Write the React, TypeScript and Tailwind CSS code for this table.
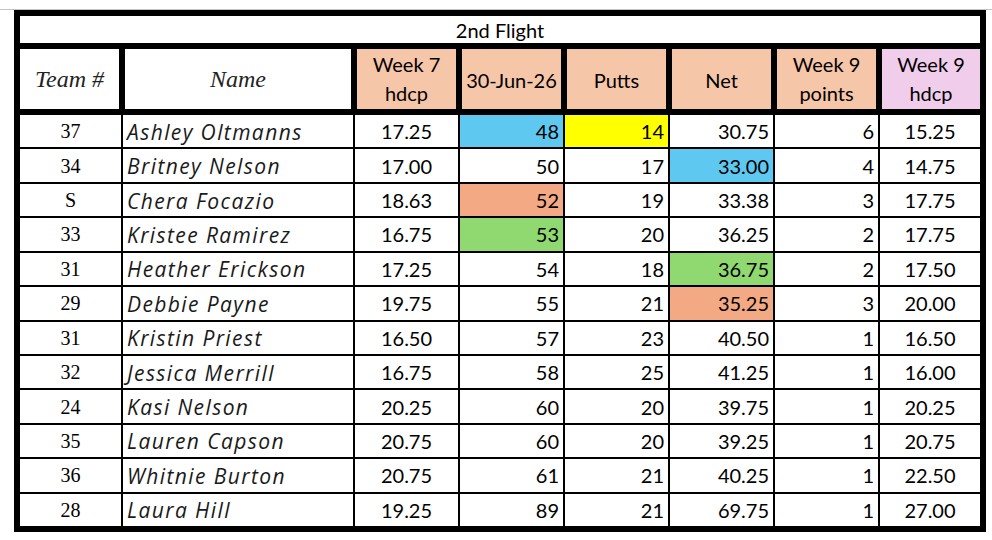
import React from "react";

type Row = {
  team: string;
  name: string;
  w7: string;
  score: string;
  putts: string;
  net: string;
  pts: string;
  hdcp: string;
  scoreBg?: string;
  puttsBg?: string;
  netBg?: string;
};

const BLUE = "bg-[#5ec8f0]";
const YELLOW = "bg-[#ffff00]";
const SALMON = "bg-[#f2a984]";
const GREEN = "bg-[#90d870]";

const rows: Row[] = [
  { team: "37", name: "Ashley Oltmanns", w7: "17.25", score: "48", putts: "14", net: "30.75", pts: "6", hdcp: "15.25", scoreBg: BLUE, puttsBg: YELLOW },
  { team: "34", name: "Britney Nelson", w7: "17.00", score: "50", putts: "17", net: "33.00", pts: "4", hdcp: "14.75", netBg: BLUE },
  { team: "S", name: "Chera Focazio", w7: "18.63", score: "52", putts: "19", net: "33.38", pts: "3", hdcp: "17.75", scoreBg: SALMON },
  { team: "33", name: "Kristee Ramirez", w7: "16.75", score: "53", putts: "20", net: "36.25", pts: "2", hdcp: "17.75", scoreBg: GREEN },
  { team: "31", name: "Heather Erickson", w7: "17.25", score: "54", putts: "18", net: "36.75", pts: "2", hdcp: "17.50", netBg: GREEN },
  { team: "29", name: "Debbie Payne", w7: "19.75", score: "55", putts: "21", net: "35.25", pts: "3", hdcp: "20.00", netBg: SALMON },
  { team: "31", name: "Kristin Priest", w7: "16.50", score: "57", putts: "23", net: "40.50", pts: "1", hdcp: "16.50" },
  { team: "32", name: "Jessica Merrill", w7: "16.75", score: "58", putts: "25", net: "41.25", pts: "1", hdcp: "16.00" },
  { team: "24", name: "Kasi Nelson", w7: "20.25", score: "60", putts: "20", net: "39.75", pts: "1", hdcp: "20.25" },
  { team: "35", name: "Lauren Capson", w7: "20.75", score: "60", putts: "20", net: "39.25", pts: "1", hdcp: "20.75" },
  { team: "36", name: "Whitnie Burton", w7: "20.75", score: "61", putts: "21", net: "40.25", pts: "1", hdcp: "22.50" },
  { team: "28", name: "Laura Hill", w7: "19.25", score: "89", putts: "21", net: "69.75", pts: "1", hdcp: "27.00" },
];

const sans = "font-['Lato','Liberation_Sans',sans-serif]";
const serif = "font-['Liberation_Serif','DejaVu_Serif',serif]";
const script = "font-['Open_Sans','Liberation_Sans',sans-serif]";

const cols = "grid grid-cols-[101px_230px_103px_103px_103px_103px_103px_100px]";

export default function App() {
  return (
    <div className="w-[992px] h-[540px] bg-white text-black overflow-hidden">
      <div className="h-[9px]" />
      <div className="h-px bg-[#c4c4c4]" />
      <div className="ml-[14px] w-[972px] bg-black p-[6px] flex flex-col gap-[6px]">
        <div className={`h-[27px] bg-white flex items-center justify-center text-[20px] ${sans}`}>
          2nd Flight
        </div>
        <div className={`${cols} gap-x-[2px] h-[60px] bg-black`}>
          <div className={`bg-white border-r-2 border-black flex items-center justify-center italic text-[24px] text-[#222] ${serif}`}>
            Team #
          </div>
          <div className={`bg-white border-x-2 border-black flex items-center justify-center italic text-[24px] text-[#222] ${serif}`}>
            Name
          </div>
          <div className={`bg-[#f6c6a9] border-x-2 border-black flex items-center justify-center text-center text-[20px] leading-[29px] ${sans}`}>
            Week 7<br />hdcp
          </div>
          <div className={`bg-[#f6c6a9] border-x-2 border-black flex items-center justify-center text-[20px] pt-[2px] ${sans}`}>
            30-Jun-26
          </div>
          <div className={`bg-[#f6c6a9] border-x-2 border-black flex items-center justify-center text-[20px] pt-[2px] ${sans}`}>
            Putts
          </div>
          <div className={`bg-[#f6c6a9] border-x-2 border-black flex items-center justify-center text-[20px] pt-[2px] ${sans}`}>
            Net
          </div>
          <div className={`bg-[#f6c6a9] border-x-2 border-black flex items-center justify-center text-center text-[20px] leading-[29px] ${sans}`}>
            Week 9<br />points
          </div>
          <div className={`bg-[#f1cdec] border-l-2 border-black flex items-center justify-center text-center text-[20px] leading-[29px] ${sans}`}>
            Week 9<br />hdcp
          </div>
        </div>
        <div className={`${cols} grid-rows-[repeat(12,minmax(0,1fr))] gap-[2px] h-[411px] bg-black leading-none`}>
          {rows.map((r, i) => (
            <React.Fragment key={i}>
              <div className={`bg-white flex items-center justify-center text-[20px] ${serif}`}>{r.team}</div>
              <div className={`bg-white flex items-center pl-1 pt-[2px] text-[21px] italic tracking-[1.4px] text-[#1a1a1a] ${script}`}>{r.name}</div>
              <div className={`bg-white flex items-center justify-center text-[20px] ${sans}`}>{r.w7}</div>
              <div className={`${r.scoreBg ?? "bg-white"} flex items-center justify-end pr-1 text-[20px] ${sans}`}>{r.score}</div>
              <div className={`${r.puttsBg ?? "bg-white"} flex items-center justify-end pr-1 text-[20px] ${sans}`}>{r.putts}</div>
              <div className={`${r.netBg ?? "bg-white"} flex items-center justify-end pr-1 text-[20px] ${sans}`}>{r.net}</div>
              <div className={`bg-white flex items-center justify-end pr-1 text-[20px] ${sans}`}>{r.pts}</div>
              <div className={`bg-white flex items-center justify-center text-[20px] ${sans}`}>{r.hdcp}</div>
            </React.Fragment>
          ))}
        </div>
      </div>
    </div>
  );
}
